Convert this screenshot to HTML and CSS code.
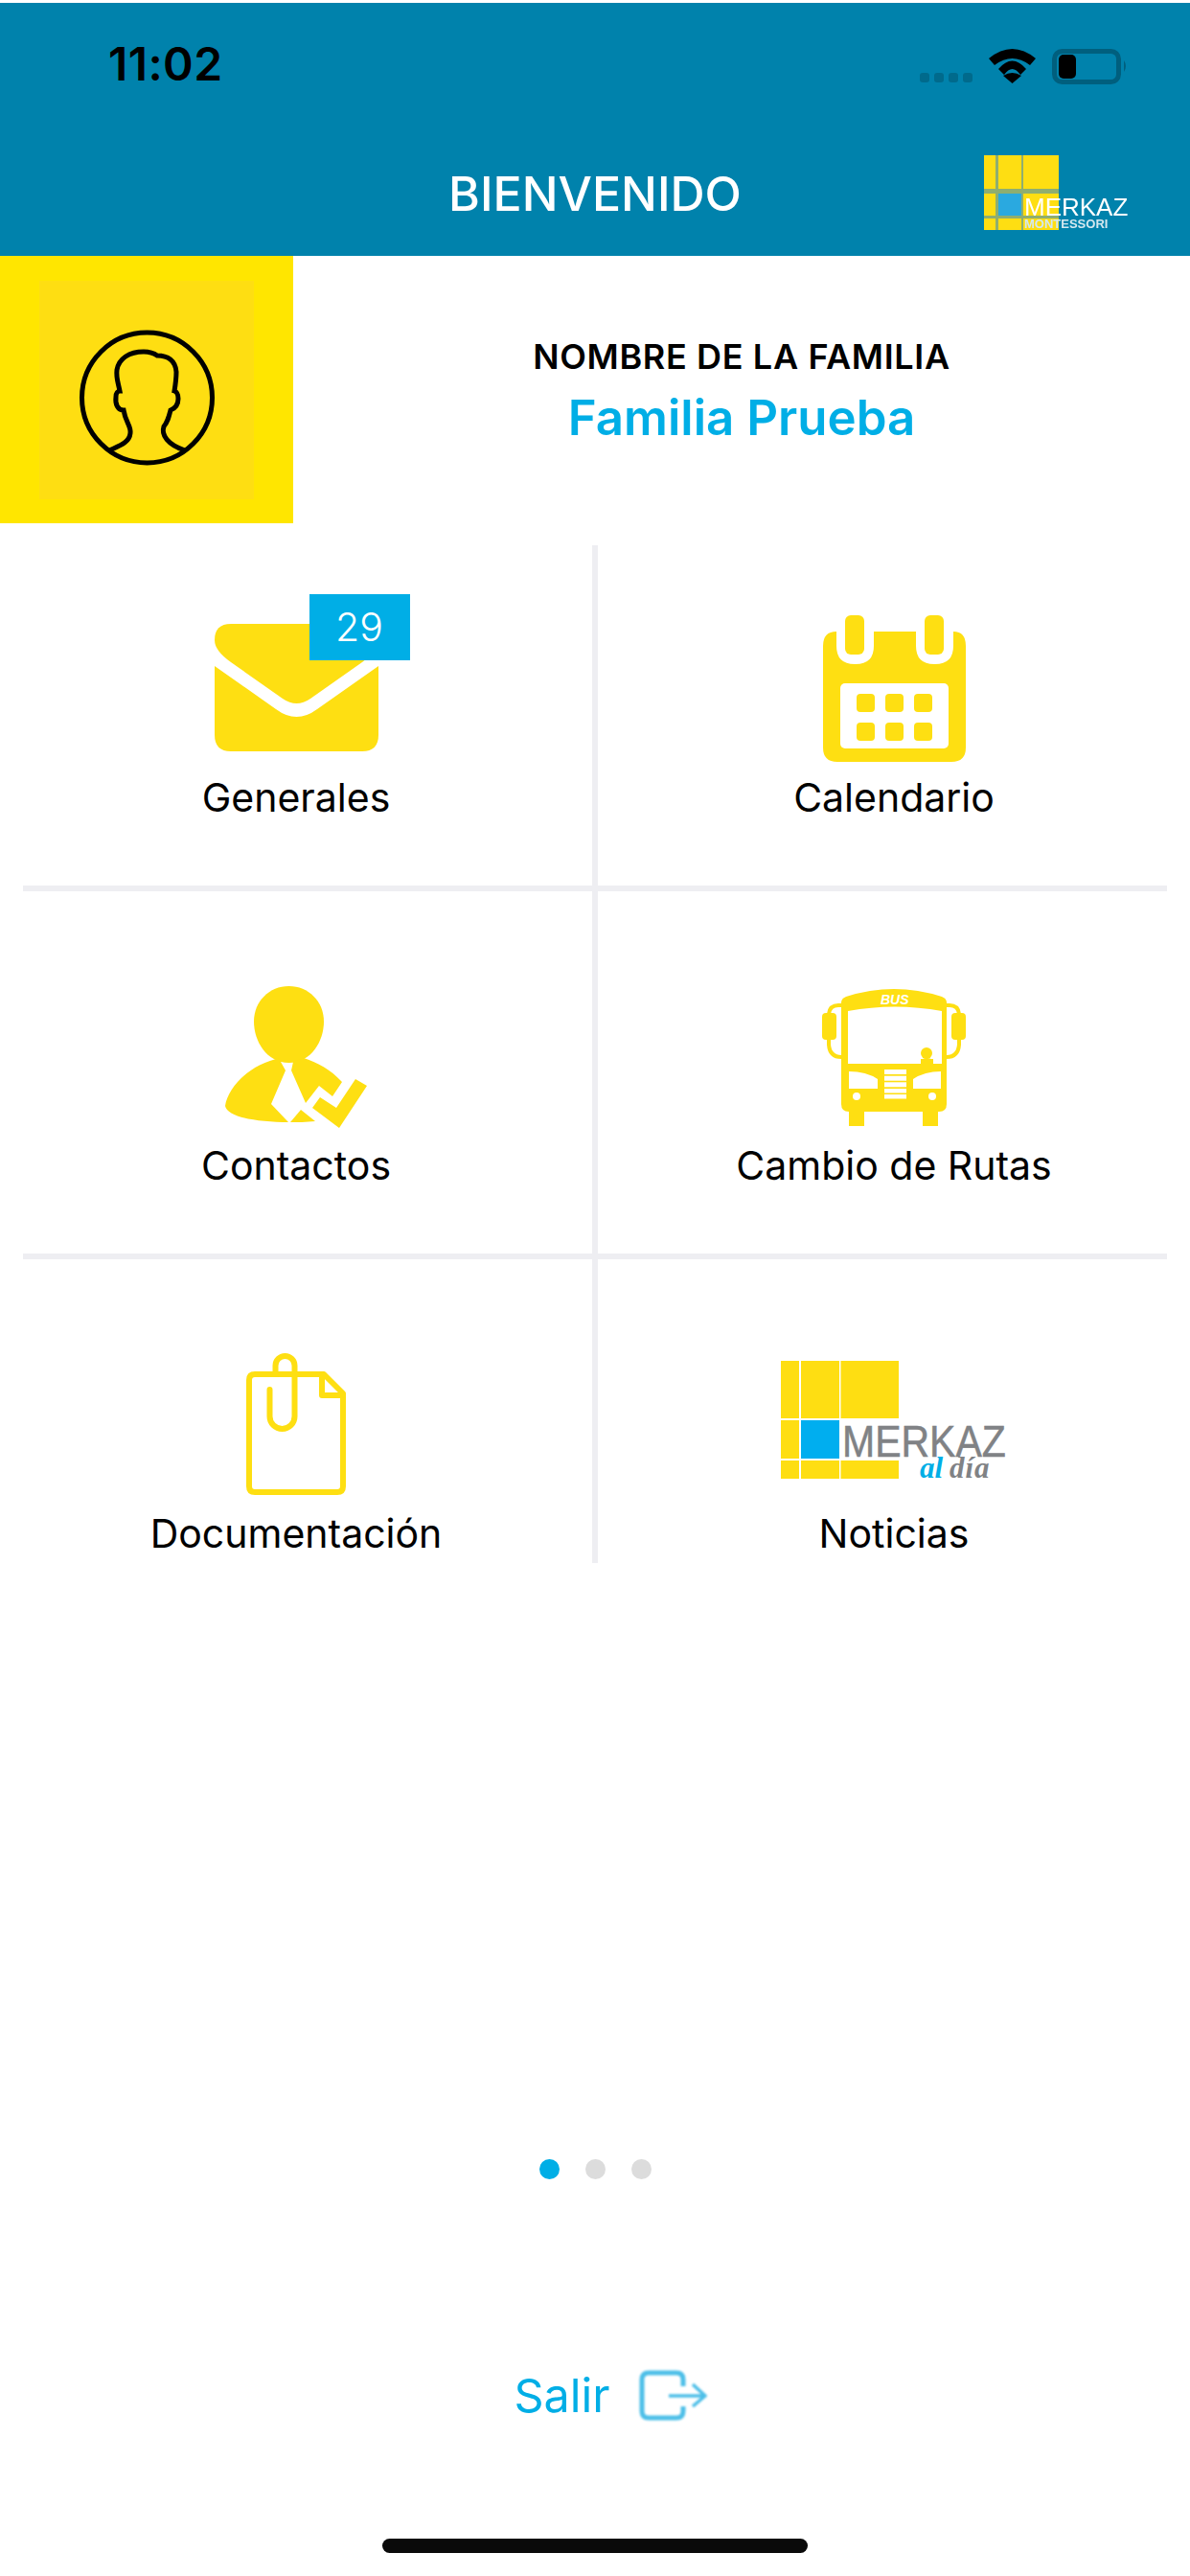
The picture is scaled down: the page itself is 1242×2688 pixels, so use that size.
FILE: index.html
```html
<!DOCTYPE html>
<html lang="es">
<head>
<meta charset="utf-8">
<title>Bienvenido</title>
<link rel="stylesheet" href="styles.css">
</head>
<body>
<div class="page">
  <header class="appbar">
    <div class="status">
      <span class="time">11:02</span>
      <div class="status-icons">
        <div class="signal"><i></i><i></i><i></i><i></i></div>
        <svg class="wifi" viewBox="0 0 49 36"><path d="M0 10Q24.500-10 49 10L43 17Q24.500 3 6 17Z"/><path d="M10 21Q24.500 4 39 21L33 27Q24.500 15 16 27Z"/><path d="M24.500 36L15 28Q24.500 22 34 28Z"/></svg>
        <svg class="battery" viewBox="0 0 79 37"><rect class="batt-shell" x="2.500" y="2.500" width="67" height="32" rx="8"/><rect x="7" y="6" width="18" height="25" rx="5"/><path class="batt-nub" d="M75 12Q79 18 75 24Z"/></svg>
      </div>
    </div>
    <div class="nav">
      <span></span>
      <h1 class="title">BIENVENIDO</h1>
      <svg class="nav-logo" viewBox="0 0 150 78">
        <g class="soft">
          <rect class="moss" width="78" height="78"/>
          <rect class="logo-y" width="12" height="35"/><rect class="logo-y" x="15" width="24" height="35"/><rect class="logo-y" x="41" width="37" height="35"/>
          <rect class="logo-y" y="40" width="12" height="23"/><rect class="logo-b" x="15" y="40" width="24" height="23"/><rect class="logo-y" x="41" y="40" width="37" height="23"/>
          <rect class="logo-y" y="66" width="12" height="12"/><rect class="logo-y" x="15" y="66" width="24" height="12"/><rect class="logo-y" x="41" y="66" width="37" height="12"/>
          <text class="nav-logo-main" x="42" y="63">MERKAZ</text>
          <text class="nav-logo-sub" x="42" y="76">MONTESSORI</text>
        </g>
      </svg>
    </div>
  </header>

  <section class="family">
    <div class="avatar-box">
      <div class="avatar-inner">
        <svg class="avatar" viewBox="0 0 141 142"><circle cx="70.500" cy="71" r="68"/><path d="M31 126C42 121 52 118 53 108C54 100 48 97 46 84C40 84 37 78 38 70C38 66 40 64 42 64C40 54 38 50 39 42C41 30 52 23 67 23C73 23 77 24 81 27C92 27 100 32 101 44C101 52 100 58 99 64C102 65 103 68 103 72C103 78 100 82 95 84C93 92 92 96 88 101C85 110 92 120 110 126"/></svg>
      </div>
    </div>
    <div class="family-info">
      <div class="family-label">NOMBRE DE LA FAMILIA</div>
      <div class="family-name">Familia Prueba</div>
    </div>
  </section>

  <main class="menu">
    <div class="row row-first">
      <div class="cell">
        <div class="mail-wrap">
          <svg class="ic-mail" viewBox="0 0 171 133"><path d="M17 0H154Q171 0 171 17Q171 27 154 40L100 78Q85.500 88 71 78L17 40Q0 28 0 17Q0 0 17 0Z"/><path d="M0 44L64 89Q85.500 105 107 89L171 44V116Q171 133 154 133H17Q0 133 0 116Z"/></svg>
          <span class="badge">29</span>
        </div>
        <span class="label">Generales</span>
      </div>
      <div class="cell">
        <svg class="ic-cal" viewBox="0 0 149 153">
          <path class="y" d="M14 17Q0 17 0 32V138Q0 153 15 153H134Q149 153 149 138V32Q149 17 136 17V32Q136 51 117 51H116Q97 51 97 32V17H53V32Q53 51 34 51H33Q14 51 14 32Z"/>
          <rect class="w" x="18" y="71" width="113" height="68" rx="5"/>
          <rect class="y" x="23" width="20" height="41" rx="6"/><rect class="y" x="106" width="20" height="41" rx="6"/>
          <rect class="y" x="35" y="82" width="19" height="19" rx="4"/><rect class="y" x="65" y="82" width="19" height="19" rx="4"/><rect class="y" x="95" y="82" width="19" height="19" rx="4"/>
          <rect class="y" x="35" y="112" width="19" height="19" rx="4"/><rect class="y" x="65" y="112" width="19" height="19" rx="4"/><rect class="y" x="95" y="112" width="19" height="19" rx="4"/>
        </svg>
        <span class="label">Calendario</span>
      </div>
    </div>
    <div class="hr"></div>
    <div class="row">
      <div class="cell">
        <svg class="ic-person" viewBox="0 0 148 149">
          <path d="M66.500 0C87 0 103 16 103 37C103 57 90 80 66.500 80C43 80 30 57 30 37C30 16 46 0 66.500 0Z"/>
          <path d="M58 75C26 81 3 105 0 125C2 137 35 142 66 142L48 123L63 88L58 79Z"/>
          <path d="M71 79L69 88L84 122L98 104L112 115L122 100C110 87 97 80 82 75Z"/>
          <path d="M68 142L79 129L94 141C85 142 75 142 68 142Z"/>
          <path d="M91 127L99 116L116 127L136 97L148 104L119 148Z"/>
        </svg>
        <span class="label">Contactos</span>
      </div>
      <div class="cell">
        <svg class="ic-bus" viewBox="0 0 150 143">
          <path class="y" d="M20 14Q20 10 25 8Q75-8 125 8Q130 10 130 14V120Q130 128 122 128H28Q20 128 20 120Z"/>
          <path class="w" d="M27 23Q76 14 125 23V78H116V73H103V78H27Z"/>
          <circle class="y" cx="109" cy="67" r="6"/><path class="y" d="M103 78V74Q109 70 116 74V78Z"/>
          <path class="w" d="M28 86Q46 86 58 94V104H28Z"/><path class="w" d="M124 86Q107 86 95 94V104H124Z"/>
          <rect class="w" x="65" y="84" width="23" height="5"/><rect class="w" x="65" y="90.700" width="23" height="5"/><rect class="w" x="65" y="97.300" width="23" height="5"/><rect class="w" x="65" y="104" width="23" height="4.500"/><rect class="w" x="65" y="110" width="23" height="4.500"/>
          <circle class="w" cx="36" cy="112" r="4"/><circle class="w" cx="115" cy="112" r="4"/>
          <rect class="y" x="28" y="126" width="16" height="17"/><rect class="y" x="105" y="126" width="16" height="17"/>
          <rect class="y" y="25" width="15" height="28" rx="4"/><rect class="y" x="135" y="25" width="15" height="28" rx="4"/>
          <path class="arm" d="M20 17H17Q8 17 7 26M7 52V58Q8 71 20 71M130 17H133Q142 17 143 26M143 52V58Q142 71 130 71"/>
          <text class="bus-text" x="61" y="15.500">BUS</text>
        </svg>
        <span class="label">Cambio de Rutas</span>
      </div>
    </div>
    <div class="hr"></div>
    <div class="row row-last">
      <div class="cell">
        <svg class="ic-doc" viewBox="0 0 104 148">
          <path d="M9 22H81L101 42V139Q101 145 95 145H9Q3 145 3 139V28Q3 22 9 22Z"/>
          <path d="M79 22V44H101"/>
          <path d="M30.500 22V13A10 10 0 0 1 50.500 13V66A13 13 0 0 1 24.500 66V38"/>
        </svg>
        <span class="label">Documentación</span>
      </div>
      <div class="cell">
        <svg class="ic-merkaz" viewBox="0 0 238 133">
          <rect class="logo-y" x="1" y="1" width="19" height="60"/><rect class="logo-y" x="22" y="1" width="40" height="60"/><rect class="logo-y" x="63.500" y="1" width="60.500" height="60"/>
          <rect class="logo-y" x="1" y="63" width="19" height="40"/><rect class="logo-b2" x="22" y="63" width="40" height="40"/>
          <rect class="logo-y" x="1" y="105" width="19" height="19"/><rect class="logo-y" x="22" y="105" width="40" height="19"/><rect class="logo-y" x="63.500" y="105" width="60.500" height="19"/>
          <text class="merkaz-main" transform="translate(65 101) scale(1 1.12)">MERKAZ</text>
          <text class="merkaz-al" x="146" y="123">al</text>
          <text class="merkaz-dia" x="177" y="123">día</text>
        </svg>
        <span class="label">Noticias</span>
      </div>
    </div>
  </main>

  <div class="pager"><i class="on"></i><i></i><i></i></div>

  <div class="logout">
    <span class="logout-text">Salir</span>
    <svg class="ic-exit" viewBox="0 0 71 53"><path class="box" d="M46 17V10Q46 3 39 3H10Q3 3 3 10V43Q3 50 10 50H39Q46 50 46 43V38"/><path class="arrow" d="M31 27H69M56 15L69 27L56 38"/></svg>
  </div>

  <div class="home-bar"></div>
</div>
</body>
</html>
```

FILE: styles.css
```css
* { box-sizing: border-box; }
html, body { margin: 0; padding: 0; background: #fff; }
body { font-family: Inter, "Liberation Sans", sans-serif; color: #000; }
.page { width: 1242px; height: 2688px; padding-top: 3px; display: flex; flex-direction: column; overflow: hidden; }

.appbar { height: 264px; background: #0082ac; flex: none; }
.status { height: 130px; padding: 0 65px 0 113px; display: flex; align-items: center; justify-content: space-between; }
.time { font-size: 48px; font-weight: 600; letter-spacing: 0.4px; margin-bottom: 3px; }
.status-icons { display: flex; align-items: flex-end; gap: 17px; margin-top: 2px; }
.signal { display: flex; gap: 5px; margin-bottom: 2px; }
.signal i { width: 10px; height: 10px; border-radius: 3px; background: #006a8c; }
.wifi { width: 49px; height: 36px; margin-bottom: 1px; fill: #000; }
.battery { width: 79px; height: 37px; fill: #000; }
.batt-shell { fill: none; stroke: #005f7e; stroke-width: 5; }
.batt-nub { fill: #005f7e; }

.nav { height: 134px; display: grid; grid-template-columns: 1fr auto 1fr; }
.title { margin: 4px 0 0; align-self: center; font-size: 50px; font-weight: 500; color: #fff; white-space: nowrap; }
.nav-logo { width: 150px; height: 78px; justify-self: end; margin: 29px 65px 0 0; }
.soft { filter: blur(0.7px); }
.moss { fill: #8fae70; }
.logo-y { fill: #fede12; }
.logo-b { fill: #2aa9e0; }
.logo-b2 { fill: #00aeef; }
.nav-logo-main { font: 400 26px "Liberation Sans", sans-serif; fill: #fff; }
.nav-logo-sub { font: 700 13px "Liberation Sans", sans-serif; fill: #d4e8ef; }

.family { display: flex; flex: none; height: 279px; }
.avatar-box { width: 306px; background: #ffe600; display: flex; align-items: center; justify-content: center; }
.avatar-inner { width: 224px; height: 228px; background: #fede12; display: flex; align-items: center; justify-content: center; padding-top: 16px; }
.avatar { width: 141px; height: 142px; fill: none; stroke: #000; stroke-width: 5; }
.family-info { flex: 1; display: flex; flex-direction: column; align-items: center; justify-content: center; padding-top: 4px; }
.family-label { font-size: 36px; font-weight: 600; line-height: 40px; letter-spacing: 0.65px; }
.family-name { margin-top: 14px; font-size: 51px; font-weight: 600; line-height: 60px; color: #00aee6; }

.menu { margin-top: 23px; flex: none; }
.row { display: flex; height: 378px; }
.row-first { height: 355px; }
.row-last { height: 317px; }
.hr { height: 6px; margin: 0 24px; background: #eeeef2; }
.cell { width: 618px; display: flex; flex-direction: column; align-items: center; justify-content: flex-end; padding-bottom: 67px; }
.cell + .cell { width: 624px; border-left: 6px solid #eeeef2; }
.row-last .cell { padding-bottom: 6px; }
.label { font-size: 41px; line-height: 50px; white-space: nowrap; color: #000; }

.mail-wrap { position: relative; width: 171px; height: 133px; margin-bottom: 23px; }
.ic-mail { display: block; width: 171px; height: 133px; fill: #fedf12; }
.badge { position: absolute; left: 99px; top: -31px; width: 105px; height: 69px; background: #00aee6; color: #fff; font-size: 41px; font-weight: 300; line-height: 69px; text-align: center; }

.y { fill: #fedf12; }
.w { fill: #fff; }
.ic-cal { width: 149px; height: 153px; margin-bottom: 12px; }
.ic-person { width: 148px; height: 149px; fill: #fedf12; margin-bottom: 13px; }
.ic-bus { width: 150px; height: 143px; margin-bottom: 16px; }
.arm { fill: none; stroke: #fedf12; stroke-width: 4; }
.bus-text { font: italic 700 14px "Liberation Sans", sans-serif; fill: #fff; }
.ic-doc { width: 104px; height: 148px; margin-bottom: 15px; fill: none; stroke: #fedf12; stroke-width: 6; stroke-linecap: round; stroke-linejoin: round; }
.ic-merkaz { width: 238px; height: 133px; margin-bottom: 23px; }
.merkaz-main { font: 400 41px "Liberation Sans", sans-serif; fill: #808285; stroke: #808285; stroke-width: 0.5px; }
.merkaz-al { font: italic 700 31px "Liberation Serif", serif; fill: #00aee6; }
.merkaz-dia { font: italic 700 31px "Liberation Serif", serif; fill: #808285; letter-spacing: 1px; }

.pager { margin-top: 622px; flex: none; display: flex; justify-content: center; gap: 27px; }
.pager i { width: 21px; height: 21px; border-radius: 50%; background: #dcdcdc; }
.pager i.on { background: #00aee6; }

.logout { margin-top: 199px; height: 53px; flex: none; display: flex; align-items: center; justify-content: center; gap: 30px; padding-left: 32px; }
.logout-text { font-size: 48.500px; line-height: 53px; color: #00aee6; }
.ic-exit { width: 71px; height: 53px; fill: none; filter: blur(0.9px); }
.box { stroke: #4dbfe8; stroke-width: 5; }
.arrow { stroke: #4dbfe8; stroke-width: 3.5; }

.home-bar { width: 444px; height: 15px; margin: 123px auto 0; flex: none; border-radius: 8px; background: #0a0a0a; }
```
